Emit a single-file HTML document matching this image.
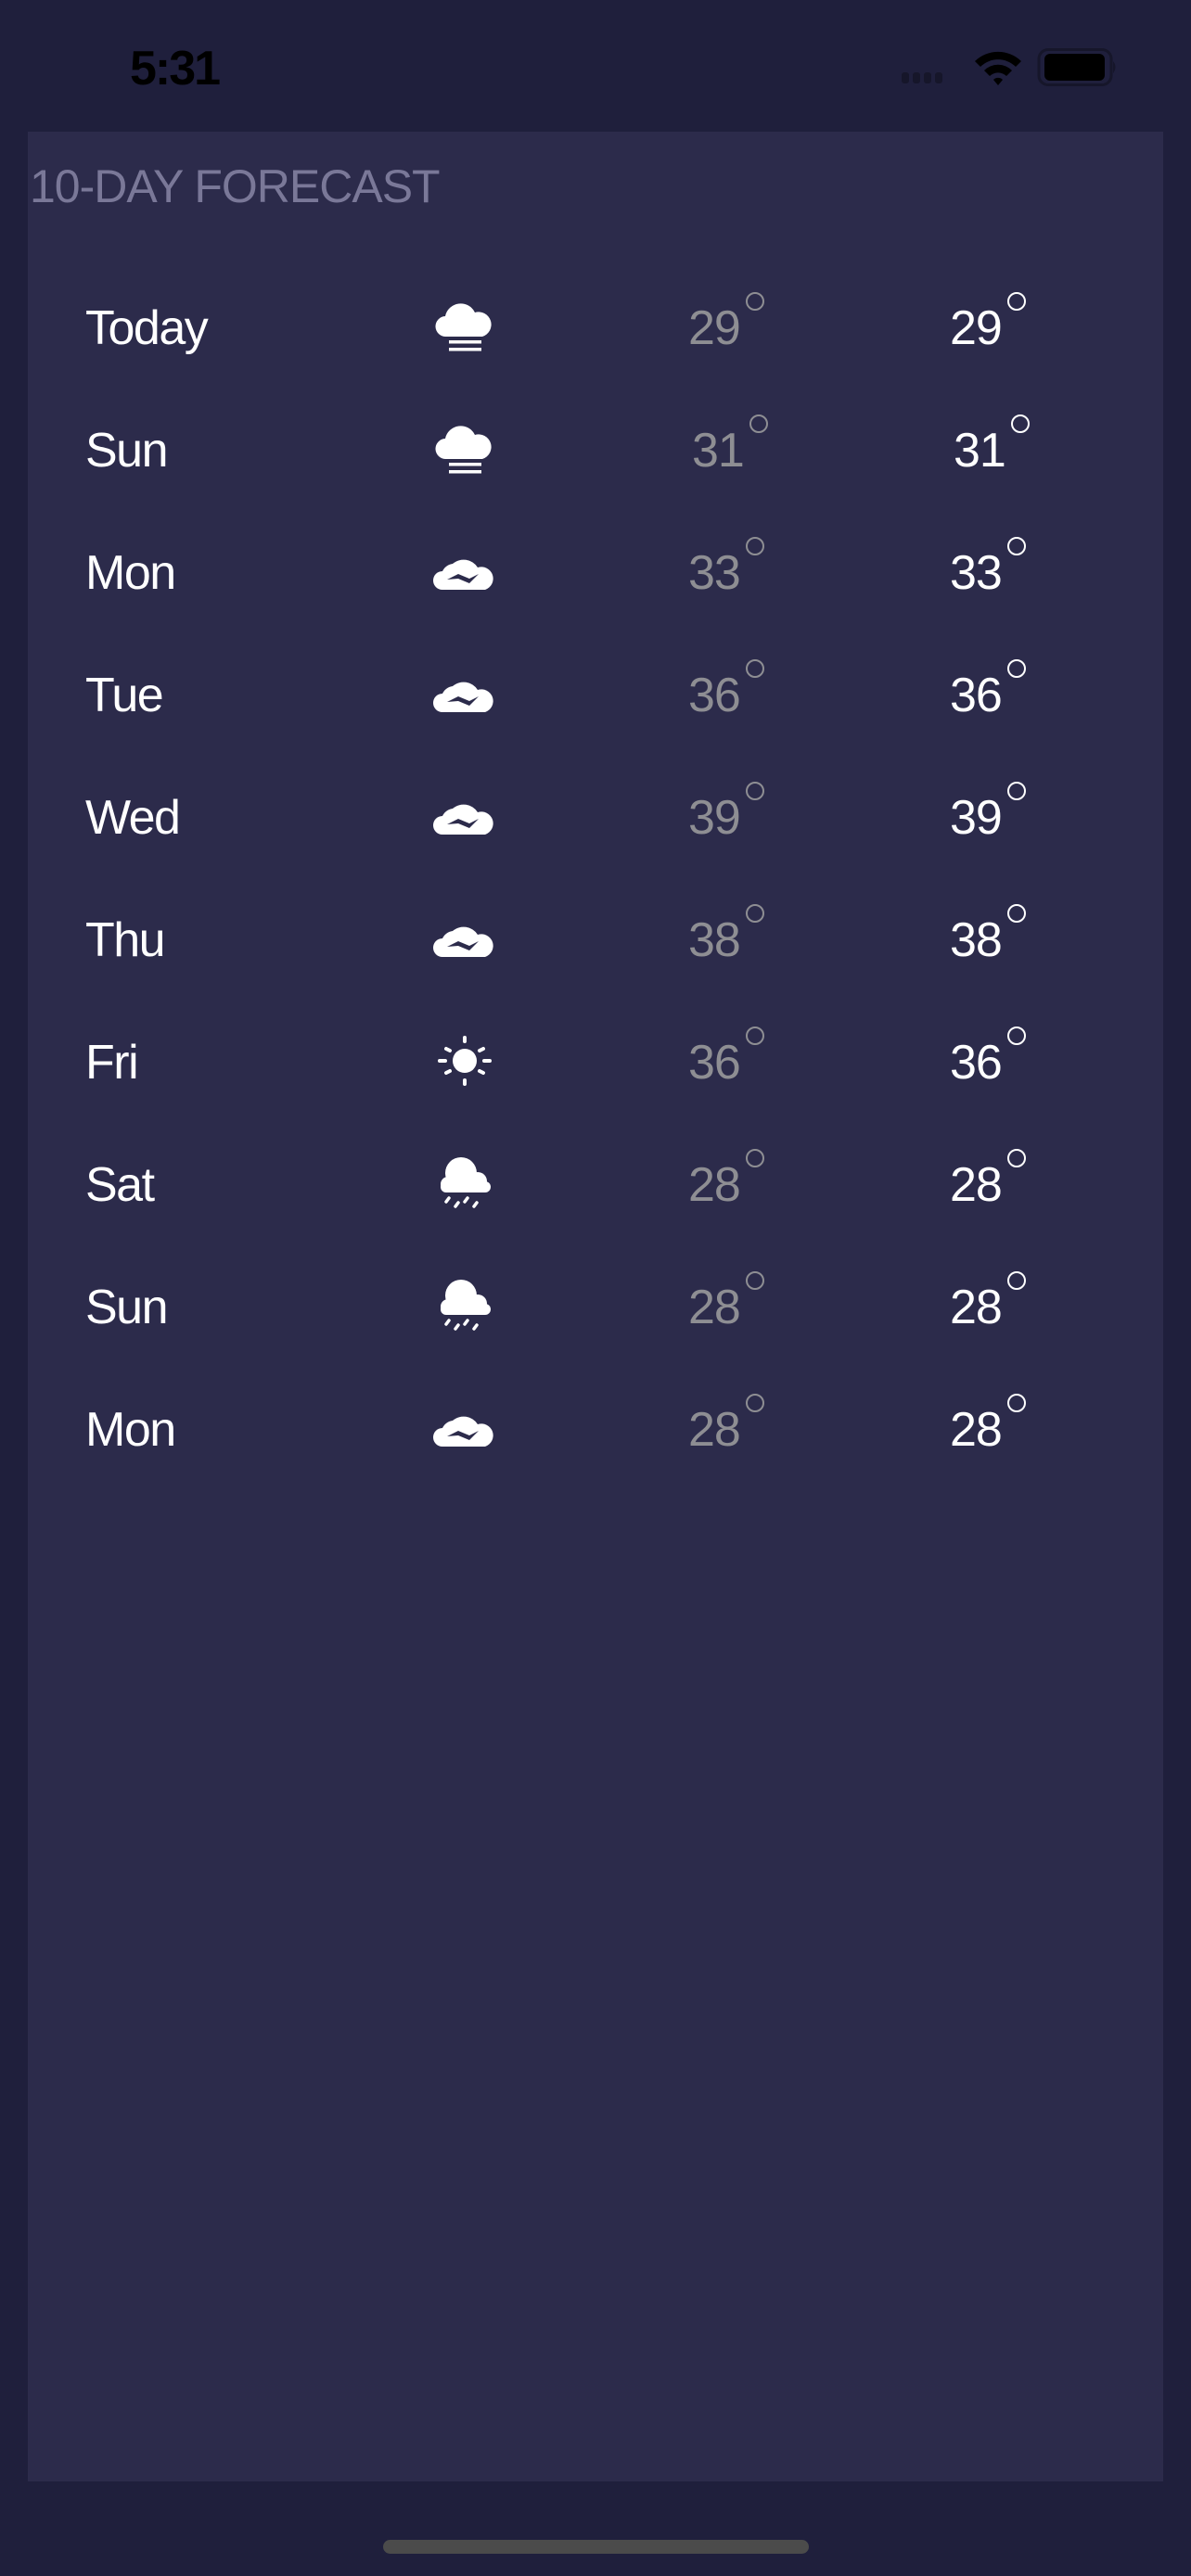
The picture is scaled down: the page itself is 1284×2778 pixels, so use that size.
<!DOCTYPE html>
<html><head><meta charset="utf-8"><style>
*{margin:0;padding:0;box-sizing:border-box}
html,body{width:1284px;height:2778px;background:#1f1f3c;overflow:hidden;font-family:"Liberation Sans",sans-serif}
.time{position:absolute;left:140px;top:44px;font-size:52px;font-weight:bold;color:#000;letter-spacing:-2px}
.panel{position:absolute;left:30px;top:142px;width:1224px;height:2534px;background:#2c2b4b}
.title{position:absolute;left:32px;top:172px;font-size:50px;color:#7a7898;letter-spacing:-1px}
.row{position:absolute;left:30px;width:1224px;height:132px}
.day{position:absolute;left:62px;top:42px;font-size:52px;color:#fff;letter-spacing:-1.5px;line-height:52px}
.t{position:absolute;top:42px;font-size:52px;line-height:52px;letter-spacing:-1px}
.lo{left:712px;color:#8e8e93}
.hi{left:994px;color:#fff}
.deg{position:absolute;top:-13px;right:-26px;width:20px;height:20px;border:2.5px solid currentColor;border-radius:50%}
.ic{position:absolute;left:435px;top:19px}
.home{position:absolute;left:413px;top:2739px;width:459px;height:15px;border-radius:8px;background:#4b4b4b}
</style></head><body>
<div class="time">5:31</div>
<svg style="position:absolute;left:970px;top:70px" width="70" height="22"><g fill="#16162a"><rect x="2" y="8" width="8" height="12" rx="3"/><rect x="14" y="8" width="8" height="12" rx="3"/><rect x="26" y="8" width="8" height="12" rx="3"/><rect x="38" y="8" width="8" height="12" rx="3"/></g></svg>
<svg style="position:absolute;left:1048px;top:52px" width="56" height="42" viewBox="0 0 56 42"><path d="M3 14 A36 36 0 0 1 53 14 L47 20 A27 27 0 0 0 9 20 Z M13 24 A21 21 0 0 1 43 24 L37 30 A13 13 0 0 0 19 30 Z M23 34 A7 7 0 0 1 33 34 L28 40 Z" fill="#000"/></svg>
<svg style="position:absolute;left:1118px;top:52px" width="86" height="42"><rect x="2" y="1.5" width="78" height="38" rx="10" fill="none" stroke="#16162a" stroke-width="3"/><rect x="8" y="6" width="65" height="29" rx="6" fill="#000"/><path d="M82 14 q5 6 0 13z" fill="#16162a"/></svg>
<div class="panel"></div>
<div class="title">10-DAY FORECAST</div>

<div class="row" style="top:286px"><div class="day">Today</div><svg class="ic" style="top:22px;left:437px" width="64" height="90" viewBox="0 0 64 90"><path d="M14 55 a11 11 0 0 1 -1 -22 a17 17 0 0 1 32 -4 a12 12 0 0 1 8 26z" fill="#fff"/><rect x="17" y="59" width="35" height="3.5" fill="#fff"/><rect x="17" y="67" width="35" height="3.5" fill="#fff"/></svg><div class="t lo">29<span class="deg"></span></div><div class="t hi">29<span class="deg"></span></div></div>
<div class="row" style="top:418px"><div class="day">Sun</div><svg class="ic" style="top:22px;left:437px" width="64" height="90" viewBox="0 0 64 90"><path d="M14 55 a11 11 0 0 1 -1 -22 a17 17 0 0 1 32 -4 a12 12 0 0 1 8 26z" fill="#fff"/><rect x="17" y="59" width="35" height="3.5" fill="#fff"/><rect x="17" y="67" width="35" height="3.5" fill="#fff"/></svg><div class="t lo" style="left:716px">31<span class="deg"></span></div><div class="t hi" style="left:998px">31<span class="deg"></span></div></div>

<div class="row" style="top:550px"><div class="day">Mon</div><svg class="ic" width="70" height="90" viewBox="0 0 70 90"><path d="M12 67 a10 10 0 0 1 0 -20 a14 14 0 0 1 11 -8 a18 18 0 0 1 27 4 a12 12 0 0 1 8 24z" fill="#fff"/><path d="M17 56 l12 -6 l12 5 l10 -5 l-10 10 l-12 -5 z" fill="#2c2b4b"/></svg><div class="t lo">33<span class="deg"></span></div><div class="t hi">33<span class="deg"></span></div></div>
<div class="row" style="top:682px"><div class="day">Tue</div><svg class="ic" width="70" height="90" viewBox="0 0 70 90"><path d="M12 67 a10 10 0 0 1 0 -20 a14 14 0 0 1 11 -8 a18 18 0 0 1 27 4 a12 12 0 0 1 8 24z" fill="#fff"/><path d="M17 56 l12 -6 l12 5 l10 -5 l-10 10 l-12 -5 z" fill="#2c2b4b"/></svg><div class="t lo">36<span class="deg"></span></div><div class="t hi">36<span class="deg"></span></div></div>
<div class="row" style="top:814px"><div class="day">Wed</div><svg class="ic" width="70" height="90" viewBox="0 0 70 90"><path d="M12 67 a10 10 0 0 1 0 -20 a14 14 0 0 1 11 -8 a18 18 0 0 1 27 4 a12 12 0 0 1 8 24z" fill="#fff"/><path d="M17 56 l12 -6 l12 5 l10 -5 l-10 10 l-12 -5 z" fill="#2c2b4b"/></svg><div class="t lo">39<span class="deg"></span></div><div class="t hi">39<span class="deg"></span></div></div>
<div class="row" style="top:946px"><div class="day">Thu</div><svg class="ic" width="70" height="90" viewBox="0 0 70 90"><path d="M12 67 a10 10 0 0 1 0 -20 a14 14 0 0 1 11 -8 a18 18 0 0 1 27 4 a12 12 0 0 1 8 24z" fill="#fff"/><path d="M17 56 l12 -6 l12 5 l10 -5 l-10 10 l-12 -5 z" fill="#2c2b4b"/></svg><div class="t lo">38<span class="deg"></span></div><div class="t hi">38<span class="deg"></span></div></div>
<div class="row" style="top:1078px"><div class="day">Fri</div><svg class="ic" style="top:0;left:435px" width="100" height="132" viewBox="0 0 100 132"><circle cx="36" cy="66" r="13" fill="#fff"/><g stroke="#fff" stroke-width="4" stroke-linecap="round"><path d="M36 41v4M36 87v4M9 66h6M57 66h6M16 53l4 2M52 77l4 2M56 53l-4 2M20 77l-4 2"/></g></svg><div class="t lo">36<span class="deg"></span></div><div class="t hi">36<span class="deg"></span></div></div>
<div class="row" style="top:1210px"><div class="day">Sat</div><svg class="ic" style="top:0;left:435px" width="100" height="132" viewBox="0 0 100 132"><g fill="#fff"><circle cx="32" cy="55" r="17"/><circle cx="50" cy="64" r="10"/><circle cx="18" cy="67" r="8"/><rect x="10" y="64" width="54" height="12" rx="6"/></g><g stroke="#fff" stroke-width="3.5" stroke-linecap="round"><path d="M19 82l-3 4M29 87l-3 4M39 82l-3 4M49 87l-3 4"/></g></svg><div class="t lo">28<span class="deg"></span></div><div class="t hi">28<span class="deg"></span></div></div>
<div class="row" style="top:1342px"><div class="day">Sun</div><svg class="ic" style="top:0;left:435px" width="100" height="132" viewBox="0 0 100 132"><g fill="#fff"><circle cx="32" cy="55" r="17"/><circle cx="50" cy="64" r="10"/><circle cx="18" cy="67" r="8"/><rect x="10" y="64" width="54" height="12" rx="6"/></g><g stroke="#fff" stroke-width="3.5" stroke-linecap="round"><path d="M19 82l-3 4M29 87l-3 4M39 82l-3 4M49 87l-3 4"/></g></svg><div class="t lo">28<span class="deg"></span></div><div class="t hi">28<span class="deg"></span></div></div>
<div class="row" style="top:1474px"><div class="day">Mon</div><svg class="ic" width="70" height="90" viewBox="0 0 70 90"><path d="M12 67 a10 10 0 0 1 0 -20 a14 14 0 0 1 11 -8 a18 18 0 0 1 27 4 a12 12 0 0 1 8 24z" fill="#fff"/><path d="M17 56 l12 -6 l12 5 l10 -5 l-10 10 l-12 -5 z" fill="#2c2b4b"/></svg><div class="t lo">28<span class="deg"></span></div><div class="t hi">28<span class="deg"></span></div></div>
<div class="home"></div>
</body></html>
